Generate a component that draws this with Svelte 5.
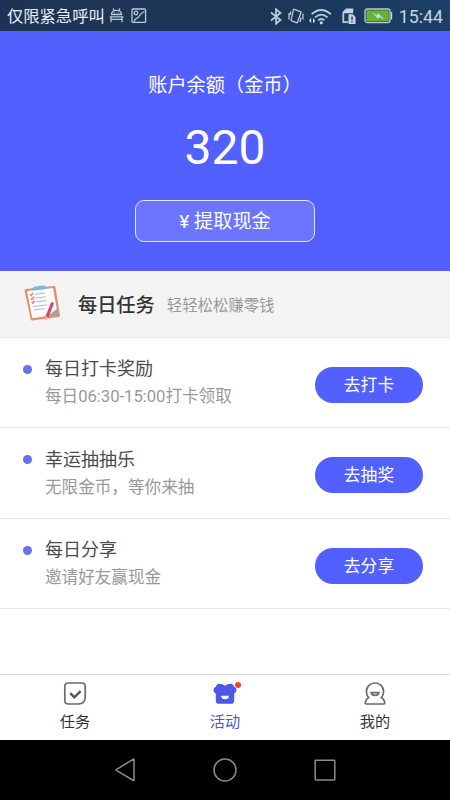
<script lang="ts">
  let coins = 320;
  let activeTab = "activity";

  const tasks: { title: string; desc: string; action: string }[] = [
    { title: "每日打卡奖励", desc: "每日06:30-15:00打卡领取", action: "去打卡" },
    { title: "幸运抽抽乐", desc: "无限金币，等你来抽", action: "去抽奖" },
    { title: "每日分享", desc: "邀请好友赢现金", action: "去分享" },
  ];

  const tabs = [
    { id: "task", label: "任务" },
    { id: "activity", label: "活动" },
    { id: "mine", label: "我的" },
  ];
</script>

<div class="screen">
  <header class="status">
    <span class="carrier">仅限紧急呼叫</span>
    <svg class="android" width="15" height="16" viewBox="0 0 15 16">
      <path d="M2.5 6.5C2.5 3.8 4.6 2.4 7.5 2.4s5 1.4 5 4.1zM4 .5l1.3 2.2M11 .5 9.7 2.7M.6 8.8h13.8M2 8.8v5.5M13 8.8v5.5M2 11.3h11" />
      <path d="M5.3 4.8h.8M8.9 4.8h.8" />
    </svg>
    <svg class="picture" width="16" height="16" viewBox="0 0 16 16">
      <rect x="1" y="1" width="13.6" height="13.4" rx="1" />
      <circle cx="5" cy="5" r="1.8" />
      <path d="M3 13.5C4.3 10 6 11 7.5 9.2S9 5.5 13.5 3.5" />
    </svg>
    <div class="indicators">
      <svg width="12" height="17" viewBox="0 0 12 17">
        <path class="bold" d="M1 4.5 10.5 12 6 15.7V1.3L10.5 5 1 12.5" />
      </svg>
      <svg class="vibrate" width="16" height="17" viewBox="0 0 16 17">
        <path d="m6.4 1.3 6 2.4q.8.3.5 1.1l-3.4 9.4q-.3.8-1.1.5L3.6 12.9q-.8-.3-.5-1.1L5.4 1.9q.3-.9 1-.6z" />
        <path d="M1 5v6.5M3 3.5 2 7M15 5.5v6M13.2 9.5 12 14" />
      </svg>
      <svg class="wifi" width="23" height="17" viewBox="0 0 23 17">
        <path class="bold" d="M2.7 6.2Q12 -2.2 21.8 6.2M6 9.4q6.2-5.6 12.6 0M9.2 12.3q3.1-2.6 6.2 0" />
        <circle class="fill" cx="12.3" cy="14.8" r="1.6" />
        <path class="fill" d="M0 12.4 2.2 9.5v5.8zM6.3 12.8 4 9.7v5.8z" />
      </svg>
      <svg class="sim" width="16" height="17" viewBox="0 0 16 17">
        <path class="bold" d="M7 14.2H2.3V4.5l3-3h6V5" />
        <path class="fill" d="M1.5 5 5.2 1h6.6v4.3H1.5zM7.5 6.2h4.3L14.5 9v7h-7z" />
        <path class="mark" d="M11 8.5v3.7M11 13.3v1.3" />
      </svg>
      <svg class="battery" width="29" height="16" viewBox="0 0 29 16">
        <rect x="1" y="1" width="25" height="13.5" rx="2" />
        <rect class="charge" x="2.3" y="2.3" width="22.4" height="10.9" />
        <path class="fill" d="M26.8 4h1.4v7.5h-1.4zM8 4.2l5 3 1-2.2 6.5 6.8-5.4-2.6-1.3 1.7z" />
      </svg>
      <span class="time">15:44</span>
    </div>
  </header>

  <section class="balance">
    <div class="balance-label">账户余额（金币）</div>
    <div class="coins">{coins}</div>
    <button class="withdraw">¥ 提取现金</button>
  </section>

  <div class="section-head">
    <svg width="38" height="38" viewBox="0 0 38 38">
      <path fill="#da956d" d="M2.7 4.1 31 1q1.3-.1 1.5 1.2L37 30.5q.2 1.2-1 1.4L9.3 35.5q-1.4.2-1.6-1.2L1.5 5.6q-.2-1.3 1.2-1.5z" />
      <path fill="#fdfafa" d="m4 6 26-3 4.8 26.6-25.5 3.6z" />
      <path fill="#7db7df" d="m9.5 3 2.4-1.6 8.8-1L23 1.6l.3 2.3-13.5 1.6z" />
      <path stroke="#a9bdcc" d="m12 9.3 10-1.2M12.8 13l10-1.2M13.6 16.8l9.7-1.2M10 21.6l14-1.8M10.7 25l11-1.4" />
      <path stroke="#e58a8c" stroke-width="1.7" d="m7 9.4 1.3 1L10.2 8M7.8 13.3l1.3 1 1.9-2.4M8.6 17.1l1.3 1 1.9-2.4" />
      <path fill="#a8a19e" d="m25 30.9 9.8-8 1.2 7.5z" />
      <path fill="#dc4862" d="m28.3 17 2.8 1-5.5 14.4-3.8 3.2.9-4.8z" />
      <path fill="#f3bd8f" d="m22.6 31.2 2.8 1.1-3.7 3.8z" />
    </svg>
    <h2>每日任务</h2>
    <span>轻轻松松赚零钱</span>
  </div>

  <main>
    {#each tasks as task}
      <div class="task">
        <i class="dot"></i>
        <div class="task-text">
          <div class="task-title">{task.title}</div>
          <div class="task-desc">{task.desc}</div>
        </div>
        <button class="go">{task.action}</button>
      </div>
    {/each}
  </main>

  <nav class="tabs">
    {#each tabs as tab}
      <button class="tab" class:active={activeTab === tab.id} on:click={() => (activeTab = tab.id)}>
        <svg width="30" height="28" viewBox="0 0 30 28">
          {#if tab.id === "task"}
            <path class="line" d="M8.3 3h13.4q3.5 0 3.5 3.5V17q0 7-7 7H8.3q-3.5 0-3.5-3.5v-14Q4.8 3 8.3 3z" />
            <path class="check" d="m10.3 13.2 4 4.2 6.3-6.3" />
          {:else if tab.id === "activity"}
            <path class="gift" d="M6.4 5.3C7.7 3 11.7 3 15 5.8 18.3 3 22.3 3 23.6 5.3q.1 1.3 1.2 1.9c2.6 1.2 2 5.2-.6 6.2v7q0 3.4-3.4 3.4H9.2q-3.4 0-3.4-3.4v-7C3.2 12.4 2.6 8.4 5.2 7.2q1.1-.6 1.2-1.9z" />
            <path class="smile" d="M11 15.7h8q-.5 3.5-4 3.5t-4-3.5z" />
          {:else}
            <path class="line" d="M8.6 17.6C7 15.8 6.4 13.9 6.4 11.4a8.6 8.4 0 0 1 17.2 0c0 2.5-.6 4.4-2.2 6.2 1.8 1.1 2.9 2.7 3.3 4.8q.3 1.6-1 1.6H6.3q-1.3 0-1-1.6c.4-2.1 1.5-3.7 3.3-4.8z" />
            <path class="line" d="M11.2 12.7h7.6q-.6 2.6-3.8 2.6t-3.8-2.6z" />
          {/if}
        </svg>
        {#if tab.id === "activity"}<i class="badge"></i>{/if}
        <span>{tab.label}</span>
      </button>
    {/each}
  </nav>

  <footer class="system-nav">
    <svg width="24" height="26" viewBox="0 0 24 26"><path d="M21 2.5v20.6q0 .7-.6.4L3.3 13.4q-.6-.4 0-.8L20.4 2.2q.6-.3.6.3z" /></svg>
    <svg width="24" height="26" viewBox="0 0 24 26"><circle cx="12" cy="13" r="11" /></svg>
    <svg width="24" height="26" viewBox="0 0 24 26"><rect x="2.2" y="3.3" width="19.6" height="19.6" rx=".6" /></svg>
  </footer>
</div>

<style>
  :global(body) {
    margin: 0;
    background: #fff;
  }

  .screen {
    display: flex;
    flex-direction: column;
    width: 450px;
    height: 800px;
    font-family: Roboto, "Noto Sans CJK SC", sans-serif;
    background: #fff;
    overflow: hidden;
  }

  button {
    padding: 0;
    font-family: inherit;
    cursor: pointer;
  }

  svg {
    display: block;
    flex: none;
    fill: none;
  }

  .status {
    display: flex;
    align-items: center;
    box-sizing: border-box;
    height: 31px;
    padding: 1px 7px 0;
    color: #e6eef8;
    background: linear-gradient(90deg, #1e3354, #1c3658 60%, #1b4065);
  }

  .status svg {
    stroke: #b9c9dc;
    stroke-width: 1.3;
  }

  .carrier {
    padding-top: 2px;
    font-size: 16.3px;
    line-height: 28px;
  }

  .android {
    margin: 0 7px 0 4px;
  }

  .indicators {
    display: flex;
    align-items: center;
    margin-left: auto;
  }

  .status .bold {
    stroke-width: 1.8;
  }

  .status .fill {
    fill: #c5d5e6;
    stroke: none;
  }

  .status .mark {
    stroke: #1c3658;
  }

  .vibrate {
    margin-left: 6px;
  }

  .wifi {
    margin-left: 5px;
  }

  .sim {
    margin-left: 9px;
  }

  .battery {
    margin: 0 6px 0 7px;
  }

  .battery .charge {
    fill: #63b52e;
    stroke: none;
  }

  .time {
    padding-top: 1px;
    color: #c5d5e6;
    font-size: 17.8px;
    line-height: 29px;
  }

  .balance {
    display: flex;
    flex-direction: column;
    align-items: center;
    box-sizing: border-box;
    height: 240px;
    padding-top: 40px;
    color: #fff;
    background: #5260ff;
  }

  .balance-label {
    font-size: 19.2px;
    line-height: 30px;
  }

  .coins {
    margin-top: 17px;
    font-size: 48px;
    line-height: 60px;
  }

  .withdraw {
    box-sizing: border-box;
    width: 180px;
    height: 42px;
    margin-top: 22px;
    padding-top: 1px;
    border: 1.5px solid #e4e7ff;
    border-radius: 9px;
    color: #fff;
    font-size: 19.2px;
    line-height: 38px;
    background: #6b75ff;
  }

  .section-head {
    display: flex;
    align-items: center;
    box-sizing: border-box;
    height: 67px;
    padding-left: 23px;
    border-bottom: 1px solid #e8e8e8;
    background: #f4f4f4;
  }

  .section-head h2 {
    margin: 0 12px 0 17px;
    padding-top: 3px;
    color: #333;
    font-size: 19.2px;
    font-weight: 500;
    line-height: 30px;
  }

  .section-head span {
    padding-top: 3px;
    color: #999;
    font-size: 15.4px;
    line-height: 30px;
  }

  main {
    flex: 1;
  }

  .task {
    display: flex;
    box-sizing: border-box;
    height: 90.4px;
    padding: 0 27px 0 23px;
    border-bottom: 1px solid #e8e8e8;
  }

  .dot {
    width: 9px;
    height: 9px;
    margin: 27px 13px 0 0;
    border-radius: 50%;
    background: #6b70ee;
  }

  .task-text {
    flex: 1;
    padding-top: 16.4px;
  }

  .task-title {
    color: #4b4b4b;
    font-size: 18px;
    line-height: 29px;
  }

  .task-desc {
    color: #999;
    font-size: 16.6px;
    line-height: 28px;
  }

  .go {
    align-self: center;
    width: 108px;
    height: 36px;
    margin-top: 4.6px;
    border: none;
    border-radius: 18px;
    color: #fff;
    font-size: 16.8px;
    line-height: 36px;
    background: #5260ff;
  }

  .tabs {
    display: flex;
    box-sizing: border-box;
    height: 66px;
    border-top: 1px solid #dedede;
  }

  .tab {
    position: relative;
    display: flex;
    flex: 1;
    flex-direction: column;
    align-items: center;
    padding-top: 5px;
    border: none;
    color: #333;
    font-size: 15.2px;
    line-height: 29px;
    background: none;
  }

  .tab.active {
    color: #4e55d0;
  }

  .line {
    stroke: #6b6b6b;
    stroke-width: 1.7;
  }

  .check {
    stroke: #555;
    stroke-width: 2.4;
  }

  .gift {
    fill: #4c56e8;
  }

  .smile {
    fill: #fff;
  }

  .badge {
    position: absolute;
    top: 7px;
    left: 85px;
    width: 6px;
    height: 6px;
    border-radius: 50%;
    background: #ee4328;
  }

  .system-nav {
    display: flex;
    justify-content: space-between;
    align-items: center;
    box-sizing: border-box;
    height: 60px;
    padding: 0 113px;
    background: #000;
  }

  .system-nav svg {
    stroke: #8b8b8b;
    stroke-width: 1.5;
  }
</style>
